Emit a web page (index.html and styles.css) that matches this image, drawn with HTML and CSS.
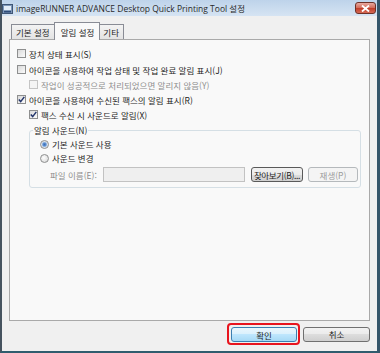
FILE: index.html
```html
<!DOCTYPE html>
<html lang="ko">
<head>
    <meta charset="UTF-8">
    <title>imageRUNNER ADVANCE Desktop Quick Printing Tool 설정</title>
    <link rel="stylesheet" href="styles.css">
</head>
<body>

    <!-- 설정 창 -->
    <div class="window">
        <div class="titlebar">
            <span class="app-icon">
                <svg width="11" height="10" viewBox="0 0 11 10">
                    <rect x="0.5" y="0.5" width="10" height="9" fill="#7d97b8" stroke="#3f5676"/>
                    <rect x="2" y="2" width="7" height="4" fill="#e4edf7"/>
                    <rect x="2" y="7" width="7" height="1.5" fill="#2c4a78"/>
                </svg>
            </span>
            <span class="title">imageRUNNER ADVANCE Desktop Quick Printing Tool 설정</span>
            <span class="close-btn">
                <svg width="9" height="7" viewBox="0 0 9 7">
                    <path d="M1 0.5 L8 6.5 M8 0.5 L1 6.5" stroke="#fff" stroke-width="1.8"/>
                </svg>
            </span>
        </div>

        <div class="client">
            <!-- 탭 -->
            <div class="tabs">
                <div class="tab">기본 설정</div>
                <div class="tab active">알림 설정</div>
                <div class="tab">기타</div>
            </div>

            <div class="panel">
                <div class="row first">
                    <span class="check"></span>
                    <span>장치 상태 표시(S)</span>
                </div>
                <div class="row">
                    <span class="check"></span>
                    <span>아이콘을 사용하여 작업 상태 및 작업 완료 알림 표시(J)</span>
                </div>
                <div class="row sub disabled">
                    <span class="check"></span>
                    <span>작업이 성공적으로 처리되었으면 알리지 않음(Y)</span>
                </div>
                <div class="row">
                    <span class="check checked">
                        <svg width="7" height="7" viewBox="0 0 7 7"><path d="M0.8 3.4 L2.7 5.6 L6.3 0.9" fill="none" stroke="#23356b" stroke-width="1.5"/></svg>
                    </span>
                    <span>아이콘을 사용하여 수신된 팩스의 알림 표시(R)</span>
                </div>
                <div class="row sub">
                    <span class="check checked">
                        <svg width="7" height="7" viewBox="0 0 7 7"><path d="M0.8 3.4 L2.7 5.6 L6.3 0.9" fill="none" stroke="#23356b" stroke-width="1.5"/></svg>
                    </span>
                    <span>팩스 수신 시 사운드로 알림(X)</span>
                </div>

                <!-- 알림 사운드 그룹 -->
                <fieldset class="group">
                    <legend>알림 사운드(N)</legend>
                    <div class="radio-row">
                        <span class="radio on"></span>
                        <span>기본 사운드 사용</span>
                    </div>
                    <div class="radio-row">
                        <span class="radio"></span>
                        <span>사운드 변경</span>
                    </div>
                    <div class="file-row">
                        <span class="file-label">파일 이름(E):</span>
                        <span class="textbox"></span>
                        <span class="btn browse">찾아보기(B)...</span>
                        <span class="btn off">재생(P)</span>
                    </div>
                </fieldset>
            </div>

            <!-- 하단 버튼 -->
            <div class="actions">
                <span class="highlight"><span class="btn default">확인</span></span>
                <span class="btn cancel">취소</span>
            </div>
        </div>
    </div>

</body>
</html>
```

FILE: styles.css
```css
body {
    margin: 0;
    font-family: "Noto Sans CJK KR", "Noto Sans", sans-serif;
    font-size: 8.5px;
    color: #1e1e1e;
    background-color: #f0f0f0;
}

.window {
    width: 380px;
    height: 353px;
    box-sizing: border-box;
    border-left: 2px solid #46535f;
    border-right: 3px solid #35566a;
    border-bottom: 2px solid #2f5d6e;
    background-color: #f0f0f0;
    display: flex;
    flex-direction: column;
}

/* 제목 표시줄 */
.titlebar {
    flex: none;
    height: 16px;
    display: flex;
    align-items: center;
    background: linear-gradient(#bed3ea, #d6e4f3);
    padding-right: 1px;
}

.app-icon {
    width: 11px;
    height: 10px;
    margin: 1px 3px 0 0;
    display: flex;
}

.title {
    flex: 1;
    font-family: "Open Sans", "Noto Sans CJK KR", sans-serif;
    font-size: 8.5px;
    color: #2a2a2a;
    white-space: nowrap;
}

.close-btn {
    width: 21px;
    height: 12px;
    box-sizing: border-box;
    border: 1px solid #6e3128;
    border-radius: 3px;
    background: linear-gradient(#e9a99f, #d4705f 45%, #c2402c 55%, #d66a55);
    display: flex;
    align-items: center;
    justify-content: center;
}

.client {
    flex: 1;
    padding: 6px 7px 0 7px;
    display: flex;
    flex-direction: column;
}

/* 탭 */
.tabs {
    display: flex;
    align-items: flex-end;
    height: 18px;
    padding-left: 2px;
    margin-bottom: -1px;
    position: relative;
    z-index: 1;
}

.tab {
    height: 15px;
    margin-bottom: 1px;
    box-sizing: border-box;
    border: 1px solid #898c95;
    border-bottom: none;
    padding: 0 4px;
    display: flex;
    align-items: center;
    background: linear-gradient(#f3f3f3, #e3e3e3);
}

.tab + .tab {
    border-left: none;
}

.tab.active {
    height: 18px;
    margin: 0 -2px 0 -1px;
    padding: 0 5px 0 6px;
    border-left: 1px solid #898c95;
    background-color: #f9f9f9;
    background-image: none;
    position: relative;
    z-index: 2;
}

.tab.active + .tab {
    border-left: 1px solid #898c95;
}

.panel {
    flex: none;
    height: 282px;
    box-sizing: border-box;
    border: 1px solid #a9a9a9;
    background-color: #f9f9f9;
    padding: 6px 0 0 7px;
}

/* 체크박스 행 */
.row {
    display: flex;
    align-items: center;
    gap: 3px;
    height: 15px;
}

.row.first {
    margin-bottom: 1px;
}

.row.sub {
    padding-left: 12px;
}

.row.disabled {
    color: #8d8d8d;
}

.check {
    width: 9px;
    height: 9px;
    box-sizing: border-box;
    border: 1px solid #8e8f8f;
    background: linear-gradient(135deg, #d9d9d9, #fbfbfb);
    display: flex;
    align-items: center;
    justify-content: center;
}

.row.disabled .check {
    border-color: #c4c4c4;
    background: #f4f4f4;
}

/* 그룹 박스 */
.group {
    margin: 2px 8px 0 12px;
    padding: 0 0 5px 10px;
    border: 1px solid #d5dfe5;
    border-radius: 3px;
    min-width: 0;
}

.group legend {
    margin-left: -7px;
    padding: 0 1px;
    line-height: 13px;
}

.radio-row {
    display: flex;
    align-items: center;
    gap: 3px;
    height: 14px;
}

.radio {
    width: 9px;
    height: 9px;
    box-sizing: border-box;
    border-radius: 50%;
    border: 1px solid #8e8f8f;
    background: radial-gradient(circle at 40% 40%, #fdfdfd, #d4d4d4);
}

.radio.on {
    background: radial-gradient(circle, #3f6fb4 0, #5d8fd2 1.5px, #b9d0ea 2.6px, #e9e9e9 3.2px);
}

.file-row {
    display: flex;
    align-items: center;
    height: 15px;
    margin-top: 2px;
    padding-left: 10px;
    color: #8d8d8d;
}

.file-label {
    width: 53px;
}

.textbox {
    width: 142px;
    height: 15px;
    box-sizing: border-box;
    border: 1px solid #c2c2c2;
    background-color: #efefef;
}

/* 버튼 */
.btn {
    height: 15px;
    box-sizing: border-box;
    border: 1px solid #707070;
    border-radius: 3px;
    background: linear-gradient(#f2f2f2, #ebebeb 50%, #dddddd 50%, #cfcfcf);
    color: #1e1e1e;
    display: flex;
    align-items: center;
    justify-content: center;
    white-space: nowrap;
}

.btn.browse {
    width: 52px;
    margin-left: 6px;
    border-color: #5a5a5a;
    letter-spacing: -0.35px;
}

.btn.off {
    width: 50px;
    margin-left: 5px;
    border-color: #b5b9bc;
    background: #f4f4f4;
    color: #9a9a9a;
}

.actions {
    display: flex;
    justify-content: flex-end;
    align-items: center;
    margin-top: 2px;
    gap: 3px;
}

.highlight {
    border: 2px solid #e8141e;
    border-radius: 4px;
    padding: 2px 1px 1px 2px;
    display: flex;
}

.btn.default {
    width: 66px;
    border-color: #3c7fb1;
    background: linear-gradient(#eaf6fd, #d9f0fc 50%, #bee6fd 50%, #a7d9f5);
}

.btn.cancel {
    width: 67px;
}
```
